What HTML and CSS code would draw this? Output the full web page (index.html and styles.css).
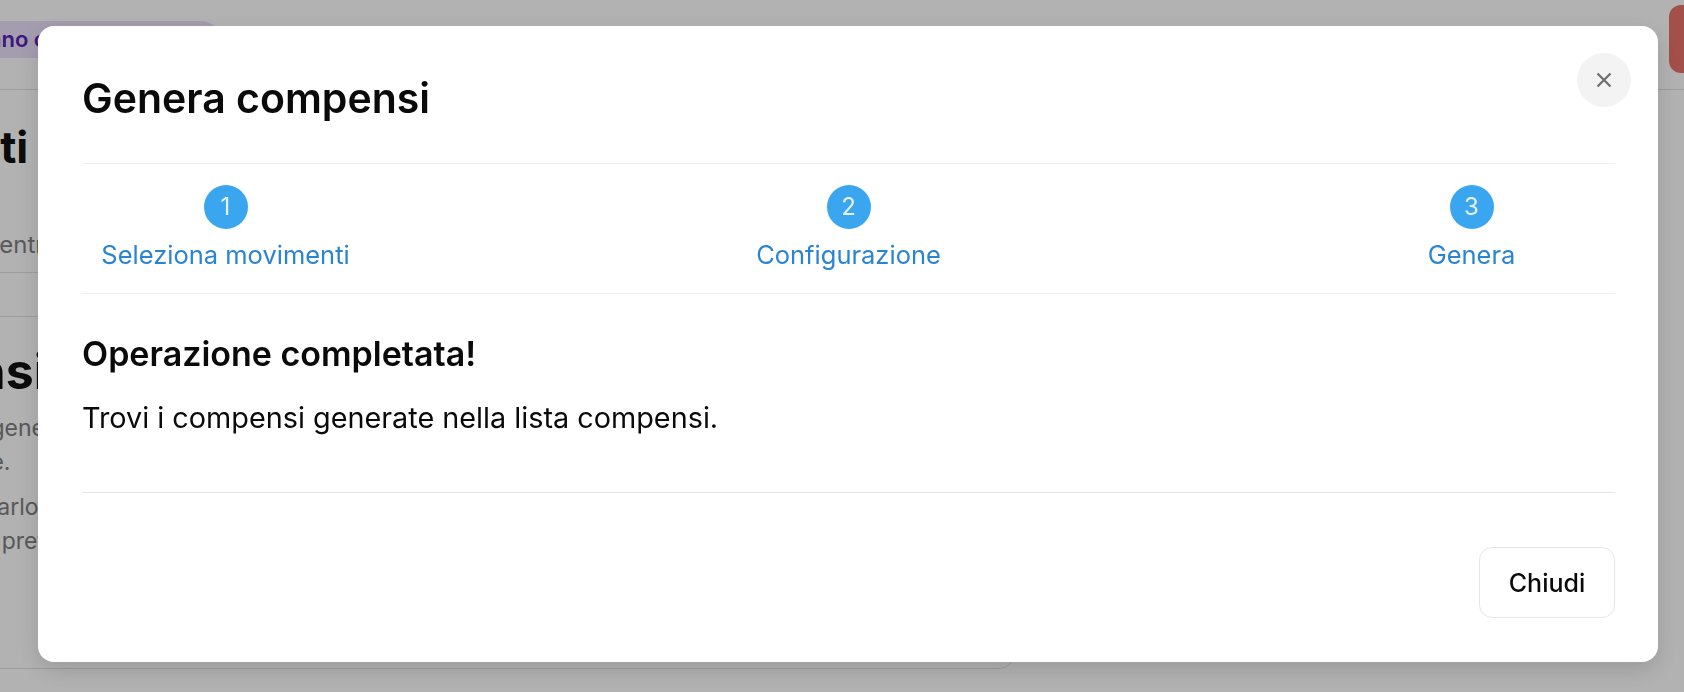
FILE: index.html
```html
<!DOCTYPE html>
<html lang="it">
<head>
<meta charset="utf-8">
<title>Genera compensi</title>
<link rel="stylesheet" href="styles.css">
</head>
<body>
<div class="page">
  <header class="topbar">
    <div class="pill">Anno contabile 2024</div>
    <button class="btn-danger">Esci dalla sessione</button>
  </header>
  <main class="main">
    <h1 class="page-title">Movimenti</h1>
    <nav class="tabs">
      <span class="tab">Movimenti in entrata</span>
      <span class="tab">Movimenti in uscita</span>
    </nav>
    <section class="card">
      <h2 class="card-title">Compensi</h2>
      <p class="card-text">Da qui, tu puoi generare i compensi per i collaboratori a partire dai movimenti<br>delle commesse.</p>
      <p class="card-text">E potrai modificarlo in seguito dalla lista compensi<br>o rimuoverlo se preferisci.</p>
    </section>
  </main>
</div>

<div class="overlay">
  <div class="modal" role="dialog" aria-modal="true">
    <button class="close-btn" aria-label="Chiudi">
      <svg width="16" height="16" viewBox="0 0 16 16" fill="none"><path d="M1.5 1.5L14.5 14.5M14.5 1.5L1.5 14.5" stroke="#6e6e6e" stroke-width="2.2"/></svg>
    </button>
    <div class="modal-header">
      <h2 class="modal-title">Genera compensi</h2>
    </div>
    <div class="steps">
      <div class="step">
        <span class="step-num">1</span>
        <span class="step-label">Seleziona movimenti</span>
      </div>
      <div class="step">
        <span class="step-num">2</span>
        <span class="step-label">Configurazione</span>
      </div>
      <div class="step">
        <span class="step-num">3</span>
        <span class="step-label">Genera</span>
      </div>
    </div>
    <div class="modal-body">
      <h3 class="result-title">Operazione completata!</h3>
      <p class="result-text">Trovi i compensi generate nella lista compensi.</p>
    </div>
    <div class="modal-footer">
      <button class="btn-close">Chiudi</button>
    </div>
  </div>
</div>
</body>
</html>
```

FILE: styles.css
```css
* { box-sizing: border-box; }
html, body { margin: 0; padding: 0; }
body {
  width: 1684px;
  height: 692px;
  overflow: hidden;
  font-family: Inter, "Noto Sans", sans-serif;
  background: #fff;
  color: #111;
}

/* ---------- background page ---------- */
.page { width: 1684px; height: 692px; overflow: hidden; }
.topbar {
  display: flex;
  justify-content: space-between;
  align-items: center;
  padding: 5px 0 16px;
  border-bottom: 1px solid #e2e2e2;
}
.pill {
  margin-left: -48px;
  height: 37px;
  padding: 0 26px 0 20px;
  border-radius: 19px;
  background: #ebe1fb;
  color: #5b21b6;
  font-size: 22px;
  font-weight: 600;
  line-height: 37px;
  white-space: nowrap;
}
.btn-danger {
  margin-right: -200px;
  width: 215px;
  height: 68px;
  border: none;
  border-radius: 12px;
  background: #ea726a;
  color: #fff;
  text-align: left;
  padding-left: 40px;
  font: 600 22px Inter, sans-serif;
}
.main { margin-left: -203px; width: 1218px; }
.page-title {
  margin: 31px 0 0 4px;
  font-size: 44px;
  line-height: 52.8px;
  font-weight: 700;
  color: #111;
}
.tabs {
  margin-top: 53px;
  display: flex;
  gap: 40px;
  border-bottom: 1px solid #e2e2e2;
  padding-left: 51px;
}
.tab {
  font-size: 24px;
  line-height: 36px;
  padding-bottom: 9px;
  color: #808080;
  white-space: nowrap;
}
.card {
  margin-top: 43px;
  height: 353px;
  border: 1px solid #e2e2e2;
  border-radius: 16px;
  padding: 24px 24px 24px 29px;
}
.card-title {
  margin: 0 0 0 -27px;
  font-size: 50px;
  line-height: 60px;
  font-weight: 700;
  color: #111;
}
.card-text {
  margin: 10px 0 0;
  font-size: 23px;
  line-height: 34px;
  color: #7e7e7e;
  white-space: nowrap;
}
.card-text + .card-text { margin-top: 11px; }

/* ---------- overlay & modal ---------- */
.overlay {
  position: fixed;
  inset: 0;
  background: rgba(0, 0, 0, 0.3);
  display: flex;
  align-items: flex-start;
  padding: 26px 0 0 38px;
}
.modal {
  position: relative;
  width: 1620px;
  height: 636px;
  background: #fff;
  border-radius: 16px;
  box-shadow: 0 8px 24px rgba(0, 0, 0, 0.14);
  padding: 0 43px 0 44px;
  display: flex;
  flex-direction: column;
}
.close-btn {
  position: absolute;
  top: 27px;
  right: 27px;
  width: 54px;
  height: 54px;
  border: none;
  border-radius: 50%;
  background: #f3f3f3;
  display: flex;
  align-items: center;
  justify-content: center;
  padding: 0;
}
.modal-header { padding: 48px 0 41px; }
.modal-title {
  margin: 0;
  font-size: 41px;
  line-height: 48px;
  font-weight: 600;
  color: #0a0a0a;
}
.steps {
  display: flex;
  justify-content: space-between;
  border-top: 1px solid #f0f0f0;
  border-bottom: 1px solid #f0f0f0;
  padding: 21px 0 22px;
}
.step {
  width: 287px;
  display: flex;
  flex-direction: column;
  align-items: center;
  gap: 9px;
}
.step-num {
  width: 44px;
  height: 44px;
  border-radius: 50%;
  background: #3ba6f0;
  color: #e4f2fd;
  font-size: 24px;
  line-height: 44px;
  text-align: center;
}
.step-label {
  font-size: 25.5px;
  line-height: 33px;
  color: #2a84d2;
  white-space: nowrap;
}
.modal-body { padding: 41px 0 53px; }
.result-title {
  margin: 0;
  font-size: 34px;
  line-height: 38px;
  font-weight: 600;
  color: #0a0a0a;
}
.result-text {
  margin: 24px 0 0;
  font-size: 28.8px;
  line-height: 42px;
  color: #0a0a0a;
}
.modal-footer {
  border-top: 1px solid #e5e5e5;
  padding-top: 54px;
  display: flex;
  justify-content: flex-end;
}
.btn-close {
  width: 136px;
  height: 71px;
  background: #fff;
  border: 1px solid #e5e5e5;
  border-radius: 13px;
  font: 500 25px Inter, sans-serif;
  color: #0a0a0a;
}
```
